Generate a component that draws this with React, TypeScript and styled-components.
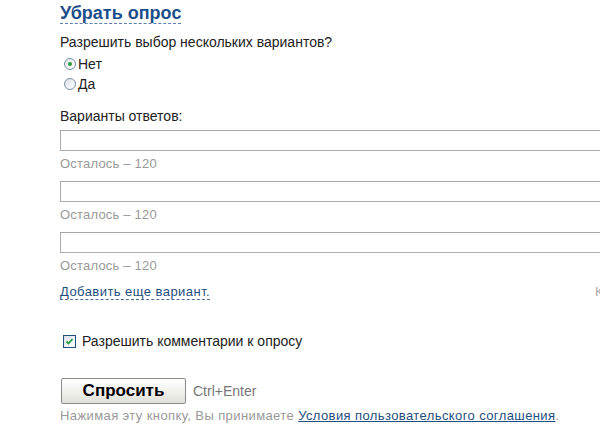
import React from 'react'
import styled, { createGlobalStyle } from 'styled-components'

const GlobalStyle = createGlobalStyle`
  html, body {
    margin: 0;
    padding: 0;
    background: #fff;
    overflow: hidden;
  }
  body {
    font-family: "Liberation Sans", Arial, sans-serif;
    color: #222;
  }
`

const Page = styled.div`
  width: 600px;
  height: 428px;
  overflow: hidden;
  padding-left: 60px;
  box-sizing: border-box;
`

const Form = styled.div`
  width: 620px;
  display: flex;
  flex-direction: column;
`

const Title = styled.a`
  align-self: flex-start;
  margin-top: 3px;
  font-size: 18px;
  font-weight: bold;
  line-height: 20px;
  color: #1c4f8a;
  text-decoration: none;
  border-bottom: 1px dashed #5b7fa8;
  cursor: pointer;
`

const Label = styled.div`
  font-size: 14px;
  line-height: 16px;
  margin-top: ${p => p.$top ?? 0}px;
`

const RadioList = styled.div`
  display: flex;
  flex-direction: column;
  margin-top: 4px;
`

const RadioRow = styled.label`
  display: flex;
  align-items: center;
  height: 20px;
  font-size: 14px;
  padding-left: 4px;
  gap: 2px;
`

const RadioDot = styled.span`
  width: 10px;
  height: 10px;
  border-radius: 50%;
  border: 1px solid #7a8fa6;
  background: linear-gradient(135deg, #dde3ea, #fff);
  box-sizing: content-box;
  display: flex;
  align-items: center;
  justify-content: center;
  &::after {
    content: '';
    width: 4px;
    height: 4px;
    border-radius: 50%;
    background: ${p => (p.$checked ? '#2b9a3a' : 'transparent')};
  }
`

const Answers = styled.div`
  display: flex;
  flex-direction: column;
  margin-top: 6px;
`

const AnswerInput = styled.input`
  display: block;
  width: 100%;
  height: 21px;
  box-sizing: border-box;
  border: 1px solid #abadb3;
  border-top-color: #a3a6ad;
  padding: 0 3px;
  margin: 0;
  font: inherit;
  outline: none;
`

const Remaining = styled.div`
  font-size: 13px;
  line-height: 15px;
  letter-spacing: 0.2px;
  color: #999;
  margin-top: 5px;
  margin-bottom: 10px;
`

const AddRow = styled.div`
  display: grid;
  grid-template-columns: 535px auto;
  align-items: baseline;
  margin-top: 1px;
`

const DashedLink = styled.a`
  justify-self: start;
  font-size: 13px;
  line-height: 15px;
  letter-spacing: 0.45px;
  color: #1f4f80;
  text-decoration: none;
  border-bottom: 1px dashed #4a6f99;
  cursor: pointer;
`

const Hint = styled.span`
  font-size: 13px;
  color: #aaa;
  white-space: nowrap;
`

const CheckRow = styled.label`
  display: flex;
  align-items: center;
  gap: 6px;
  font-size: 14px;
  margin-top: 33px;
  padding-left: 3px;
`

const CheckBox = styled.span`
  width: 11px;
  height: 11px;
  border: 1px solid #1c5180;
  background: linear-gradient(135deg, #dce2e8, #fff);
  display: flex;
  align-items: center;
  justify-content: center;
`

const ActionRow = styled.div`
  display: flex;
  align-items: center;
  gap: 7px;
  margin-top: 29px;
`

const AskButton = styled.button`
  width: 125px;
  height: 26px;
  margin: 0 0 0 1px;
  font-family: "Liberation Sans", Arial, sans-serif;
  font-size: 17px;
  font-weight: bold;
  color: #000;
  border: 1px solid #8b8b8b;
  border-radius: 2px;
  background: linear-gradient(#ffffff, #eeeeea 60%, #e0e0da);
  padding: 0;
`

const Shortcut = styled.span`
  font-size: 14px;
  color: #777;
`

const Note = styled.div`
  font-size: 13px;
  line-height: 15px;
  letter-spacing: 0.4px;
  color: #999;
  margin-top: 4px;
  a {
    color: #1f4f80;
    text-decoration: underline;
  }
`

const CheckMark = () => (
  <svg width="9" height="9" viewBox="0 0 9 9">
    <path d="M1.5 4.5 L3.5 6.5 L7.5 2" stroke="#2b9a3a" strokeWidth="1.8" fill="none" />
  </svg>
)

export default function App() {
  const answers = [0, 1, 2]
  return (
    <>
      <GlobalStyle />
      <Page>
        <Form>
          <Title>Убрать опрос</Title>
          <Label $top={10}>Разрешить выбор нескольких вариантов?</Label>
          <RadioList>
            <RadioRow>
              <RadioDot $checked />
              Нет
            </RadioRow>
            <RadioRow>
              <RadioDot />
              Да
            </RadioRow>
          </RadioList>
          <Label $top={14}>Варианты ответов:</Label>
          <Answers>
            {answers.map(i => (
              <div key={i}>
                <AnswerInput type="text" />
                <Remaining>Осталось – 120</Remaining>
              </div>
            ))}
          </Answers>
          <AddRow>
            <DashedLink>Добавить еще вариант.</DashedLink>
            <Hint>Каждый вариант</Hint>
          </AddRow>
          <CheckRow>
            <CheckBox>
              <CheckMark />
            </CheckBox>
            Разрешить комментарии к опросу
          </CheckRow>
          <ActionRow>
            <AskButton>Спросить</AskButton>
            <Shortcut>Ctrl+Enter</Shortcut>
          </ActionRow>
          <Note>
            Нажимая эту кнопку, Вы принимаете <a>Условия пользовательского соглашения</a>.
          </Note>
        </Form>
      </Page>
    </>
  )
}
